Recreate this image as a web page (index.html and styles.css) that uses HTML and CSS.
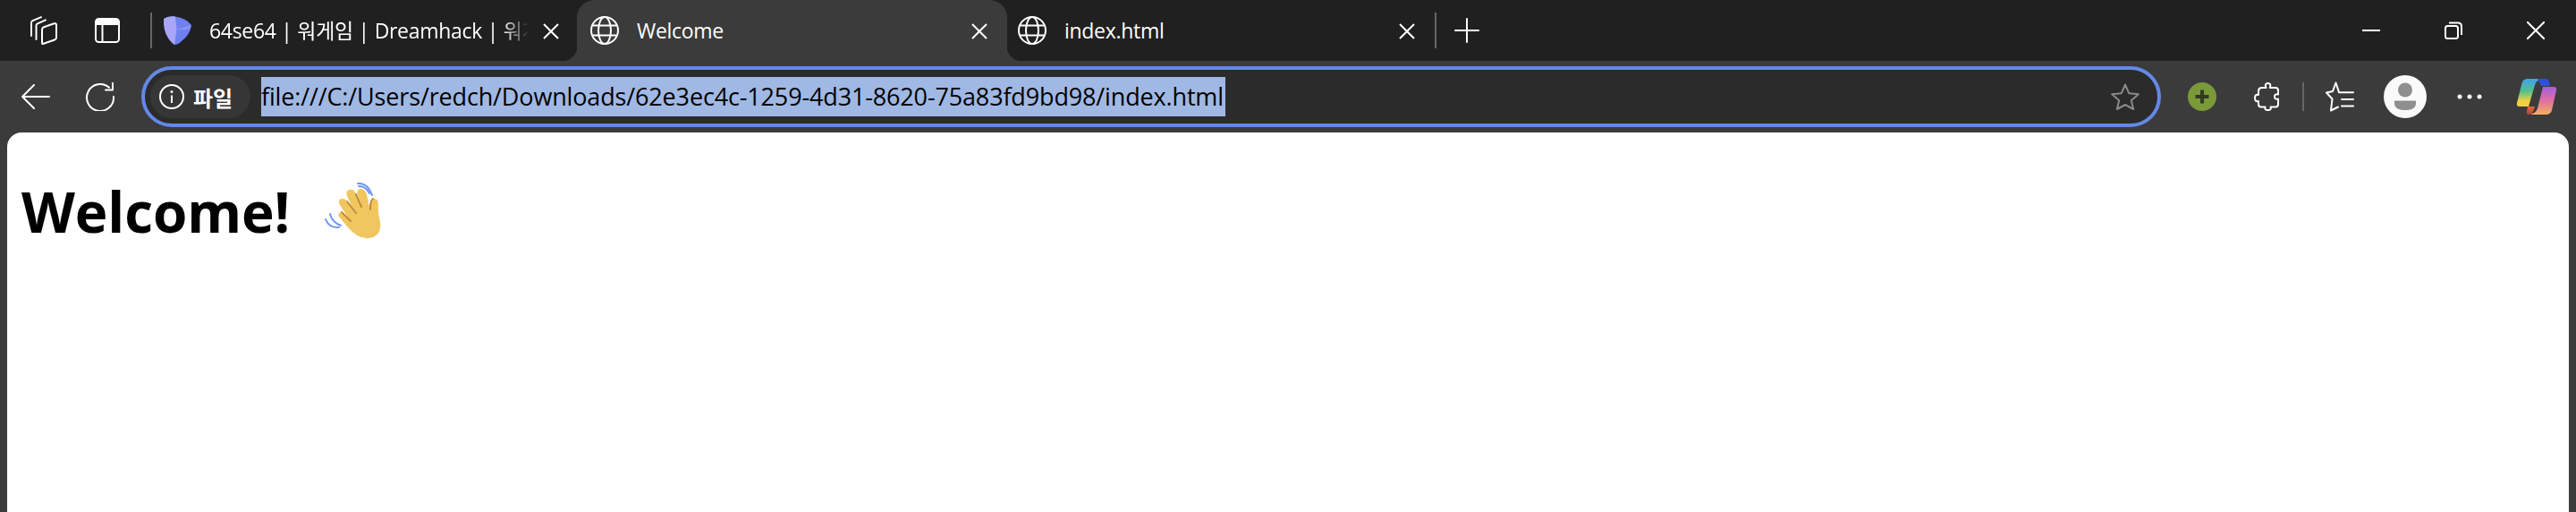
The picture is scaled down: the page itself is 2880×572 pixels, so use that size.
FILE: index.html
```html
<!DOCTYPE html>
<html lang="ko">
<head>
<meta charset="utf-8">
<title>Welcome</title>
<link rel="stylesheet" href="styles.css">
</head>
<body>
<header class="tabstrip">
  <svg class="ico collections" viewBox="0 0 32 32" fill="none" stroke="#fff" stroke-width="2" stroke-linecap="round" stroke-linejoin="round"><path d="M3 22V7.500Q3 6 4.500 5.200L14 1.200"/><path d="M8.500 26V10.500Q8.500 9 10 8.300L19 4.300"/><path d="M16 31L29 26.500Q31 25.800 31 24V10Q31 7.600 28.500 8.300L17 12.300Q15 13 15 15V29.500Q15 31.400 16 31Z"/></svg>
  <svg class="ico sidebar" viewBox="0 0 28 28"><rect x="1" y="1" width="26" height="26" rx="3.500" fill="none" stroke="#fff" stroke-width="2"/><path d="M1 4.500Q1 1 4.500 1H23.500Q27 1 27 4.500V8H1Z" fill="#fff"/><path d="M8.500 8V27" stroke="#fff" stroke-width="2"/></svg>
  <span class="strip-div first"></span>
  <div class="tab tab-one">
    <svg class="ico favicon" viewBox="0 0 32 32"><path d="M1 3Q6-.5 14 .5Q26 2 32 10Q31 20 21 28Q17 32 13 32Q5 26 2 15Q1 8 1 3Z" fill="#6f80f2"/><path d="M1 3Q6-.5 14 .5L15.500 15L13 32Q5 26 2 15Q1 8 1 3Z" fill="#a9a6f8"/><path d="M15.500 15L32 10Q31 12 30 14Q22 16 15.500 15Z" fill="#8e94f6"/></svg>
    <span class="tab-title fade">64se64 | 워게임 | Dreamhack | 워게</span>
    <svg class="close" viewBox="0 0 18 18"><path d="M1 1L17 17M17 1L1 17" stroke="#fff" stroke-width="2"/></svg>
  </div>
  <div class="tab active">
    <svg class="ico globe" viewBox="0 0 32 32" fill="none" stroke="#fff" stroke-width="2"><circle cx="16" cy="16" r="15"/><ellipse cx="16" cy="16" rx="7" ry="15"/><path d="M2.500 10.500H29.500M2.500 21.500H29.500"/></svg>
    <span class="tab-title">Welcome</span>
    <svg class="close" viewBox="0 0 18 18"><path d="M1 1L17 17M17 1L1 17" stroke="#fff" stroke-width="2"/></svg>
  </div>
  <div class="tab tab-three">
    <svg class="ico globe" viewBox="0 0 32 32" fill="none" stroke="#fff" stroke-width="2"><circle cx="16" cy="16" r="15"/><ellipse cx="16" cy="16" rx="7" ry="15"/><path d="M2.500 10.500H29.500M2.500 21.500H29.500"/></svg>
    <span class="tab-title">index.html</span>
    <svg class="close" viewBox="0 0 18 18"><path d="M1 1L17 17M17 1L1 17" stroke="#fff" stroke-width="2"/></svg>
  </div>
  <span class="strip-div second"></span>
  <svg class="ico plus" viewBox="0 0 28 28"><path d="M14 1V27M1 14H27" stroke="#fff" stroke-width="2" stroke-linecap="round"/></svg>
  <div class="window-controls">
    <svg class="win" viewBox="0 0 20 20"><path d="M0 10H20" stroke="#fff" stroke-width="2"/></svg>
    <svg class="win" viewBox="0 0 20 20" fill="none" stroke="#fff" stroke-width="2"><rect x="1" y="5" width="14" height="14" rx="2.500"/><path d="M5 1.500H15Q19 1.500 19 5.500V15"/></svg>
    <svg class="win" viewBox="0 0 20 20"><path d="M0 0L20 20M20 0L0 20" stroke="#fff" stroke-width="2"/></svg>
  </div>
</header>

<nav class="toolbar">
  <svg class="ico back" viewBox="0 0 32 28" fill="none" stroke="#fff" stroke-width="2" stroke-linecap="round" stroke-linejoin="round"><path d="M14 1L1 14L14 27M1 14H31"/></svg>
  <svg class="ico reload" viewBox="0 0 32 32" fill="none" stroke="#fff" stroke-width="2" stroke-linecap="round" stroke-linejoin="round"><path d="M26 5.800A15 15 0 1 0 31 16"/><path d="M30 0.800V8.500H22"/></svg>
  <div class="omnibox">
    <div class="chip">
      <svg class="info" viewBox="0 0 28 28" fill="none" stroke="#fff" stroke-width="2"><circle cx="14" cy="14" r="13"/><path d="M14 12.500V21"/><circle cx="14" cy="8.500" r=".6"/></svg>
      <span class="chip-text">파일</span>
    </div>
    <span class="url">file:///C:/Users/redch/Downloads/62e3ec4c-1259-4d31-8620-75a83fd9bd98/index.html</span>
    <svg class="star" viewBox="0 0 32 30" fill="none" stroke="#8a8a8a" stroke-width="2" stroke-linejoin="round"><path d="M16 1.500L20.200 11.200L30.800 12.200L22.800 19.200L25.200 29L16 24L6.800 29L9.200 19.200L1.200 12.200L11.800 11.200Z"/></svg>
  </div>
  <svg class="ico addon" viewBox="0 0 32 32"><circle cx="16" cy="16" r="16" fill="#7a9a3a"/><path d="M16 8.500V23.500M8.500 16H23.500" stroke="#2f3a22" stroke-width="4"/></svg>
  <svg class="ico puzzle" viewBox="0 0 28 32" fill="none" stroke="#fff" stroke-width="2" stroke-linejoin="round"><path d="M9 6H13.500Q11.500 1 15.500 1Q19.500 1 17.800 6H24Q27 6 27 9V13.500Q23 12.500 23 16Q23 19.500 27 18.500V24.500Q27 27.500 24 27.500H18.500Q19.800 31 15.500 31Q11.500 31 12.500 27.500H8Q5 27.500 5 24.500V21Q1 22 1 17.500Q1 13 5 14V10Q5 6 9 6Z"/></svg>
  <span class="tool-div"></span>
  <svg class="ico favs" viewBox="0 0 32 34" fill="none" stroke="#fff" stroke-width="2" stroke-linejoin="round" stroke-linecap="round"><path d="M15 12L11.500 1.500L8 11L1 12.500L7.500 19.500L6 32.500L14 28.500"/><path d="M15 12.200H31M18 20H31M18 27.500H31"/></svg>
  <div class="avatar">
    <svg class="avatar-glyph" viewBox="0 0 48 48"><circle cx="24" cy="16.500" r="8" fill="#8f8f8f"/><path d="M12 28.500H36V31Q36 39 24 39Q12 39 12 31Z" fill="#8f8f8f"/></svg>
  </div>
  <svg class="ico dots" viewBox="0 0 28 6"><circle cx="3" cy="3" r="2.500" fill="#fff"/><circle cx="14" cy="3" r="2.500" fill="#fff"/><circle cx="25" cy="3" r="2.500" fill="#fff"/></svg>
  <svg class="ico copilot" viewBox="0 0 46 42">
    <defs>
      <linearGradient id="cpa" x1="0" y1="0" x2="0" y2="1"><stop offset="0" stop-color="#3fa0f0"/><stop offset=".45" stop-color="#55c08a"/><stop offset=".8" stop-color="#f0d040"/></linearGradient>
      <linearGradient id="cpb" x1="0" y1="0" x2="0" y2="1"><stop offset="0" stop-color="#a55ee0"/><stop offset=".5" stop-color="#e070a0"/><stop offset="1" stop-color="#f4b060"/></linearGradient>
      <linearGradient id="cpc" x1="0" y1="0" x2="0" y2="1"><stop offset="0" stop-color="#e86a3a"/><stop offset="1" stop-color="#b04040"/></linearGradient>
    </defs>
    <path d="M32 1H13Q8 1 6.500 6L1 28Q0 32 4 32H14L21 8Q23 1 32 1Z" fill="url(#cpa)"/>
    <path d="M24 1H33Q36 1 37 5L38 9H28Z" fill="#2f50d8"/>
    <path d="M30 10H42Q46 10 45 14L40 36Q39 41 33 41H13Q22 41 24 34L30 10Z" fill="url(#cpb)"/>
    <path d="M13 32H21L18 40Q17 41 14 41Q11 41 12 37Z" fill="url(#cpc)"/>
  </svg>
</nav>

<main class="page">
  <h1 class="greeting">Welcome!
    <svg class="wave" viewBox="0 0 64 64" role="img" aria-label="waving hand">
      <g fill="none" stroke="#6f97f0" stroke-width="2" stroke-linecap="round"><path d="M6 35Q8 44 18 48"/><path d="M1 41Q5 51 16 50"/><path d="M38 4Q46 4 50 12"/><path d="M37 1Q48 0 53 14"/></g>
      <path d="M16 38Q14 34 18 33L26 39L17 25Q14 19 19 18Q22 17 25 21L33 33L25 15Q23 9 28 8Q33 7 35 13L42 27L37 14Q35 8 40 7Q45 7 47 13L50 27Q51 19 54 18Q60 17 60 24Q59 32 62 44Q64 60 50 62Q38 64 26 50Z" fill="#f0c75e"/>
      <g fill="none" stroke="#c08a38" stroke-width="2" stroke-linecap="round"><path d="M19 33L29 43"/><path d="M25 21L35 34"/><path d="M35 13L41 27"/><path d="M54 18Q51 20 51 30"/></g>
    </svg>
  </h1>
</main>
</body>
</html>
```
FILE: styles.css
```css
* { box-sizing: border-box; }
html, body { margin: 0; height: 572px; overflow: hidden; }
body { background: #3b3b3b; font-family: "Open Sans", "Noto Sans CJK KR", sans-serif; color: #fff; }

.ico { display: block; flex: none; }

.tabstrip { display: flex; align-items: center; height: 68px; background: #202020; padding-left: 32px; }
.collections { width: 32px; height: 32px; }
.sidebar { width: 28px; height: 28px; margin-left: 42px; }
.strip-div { flex: none; width: 2px; height: 40px; background: #666; }
.strip-div.first { margin-left: 34px; }

.tab { position: relative; display: flex; align-items: center; flex: none; height: 68px; }
.tab-one { width: 463px; margin-left: 12px; }
.tab.active { width: 481px; padding-left: 15px; background: #3b3b3b; border-radius: 20px 20px 0 0; }
.tab-three { width: 478px; padding-left: 12px; }
.tab.active::before, .tab.active::after { content: ""; position: absolute; bottom: 0; width: 16px; height: 16px; }
.tab.active::before { left: -16px; background: radial-gradient(circle at 0 0, transparent 16px, #3b3b3b 16.500px); }
.tab.active::after { right: -16px; background: radial-gradient(circle at 100% 0, transparent 16px, #3b3b3b 16.500px); }

.favicon, .globe { width: 32px; height: 32px; }
.tab-title { flex: 1; min-width: 0; margin-left: 20px; font-size: 23px; line-height: 32px; white-space: nowrap; overflow: hidden; letter-spacing: -.3px; }
.tab-title.fade { -webkit-mask-image: linear-gradient(90deg, #000 92%, transparent 100%); mask-image: linear-gradient(90deg, #000 92%, transparent 100%); }
.close { flex: none; width: 18px; height: 18px; margin: 2px 22px 0 22px; }
.tab-one .close { margin-left: 16px; margin-right: 20px; }

.plus { width: 28px; height: 28px; margin-left: 20px; }
.window-controls { display: flex; gap: 72px; margin-left: auto; padding-right: 35px; }
.win { width: 20px; height: 20px; }

.toolbar { display: flex; align-items: center; height: 80px; padding-left: 24px; }
.back { width: 32px; height: 28px; }
.reload { width: 32px; height: 32px; margin-left: 40px; }
.omnibox { display: flex; align-items: center; flex: none; width: 2258px; height: 68px; margin-left: 30px; padding-left: 6px; background: #2b2b2b; border: 4px solid #6488e8; border-radius: 34px; }
.chip { display: flex; align-items: center; height: 48px; width: 112px; padding-left: 10px; border-radius: 24px; background: #363636; }
.info { width: 28px; height: 28px; flex: none; }
.chip-text { margin-left: 10px; font-size: 24px; font-weight: 700; font-family: "Noto Sans CJK KR", sans-serif; white-space: nowrap; }
.url { margin-left: 12px; height: 44px; padding: 0 2px 0 0; background: #a0b8e4; color: #000; font-size: 27px; line-height: 44px; white-space: nowrap; letter-spacing: -.15px; }
.star { width: 32px; height: 30px; margin-left: auto; margin-right: 20px; }

.addon { width: 32px; height: 32px; margin-left: 30px; }
.puzzle { width: 28px; height: 32px; margin-left: 42px; }
.tool-div { flex: none; width: 2px; height: 32px; margin-left: 26px; background: #666; }
.favs { width: 32px; height: 34px; margin-left: 24px; }
.avatar { display: flex; flex: none; width: 48px; height: 48px; margin-left: 33px; border-radius: 50%; background: #fafafa; }
.avatar-glyph { width: 48px; height: 48px; }
.dots { width: 28px; height: 6px; margin-left: 34px; }
.copilot { width: 46px; height: 42px; margin-left: 38px; }

.page { height: 424px; margin: 0 8px; padding: 52px 16px 0; background: #fff; border-radius: 16px 16px 0 0; color: #000; }
.greeting { display: flex; align-items: center; gap: 39px; margin: 0; font-size: 62px; line-height: 72px; font-weight: 700; letter-spacing: -.1px; }
.wave { flex: none; width: 64px; height: 64px; }
```
